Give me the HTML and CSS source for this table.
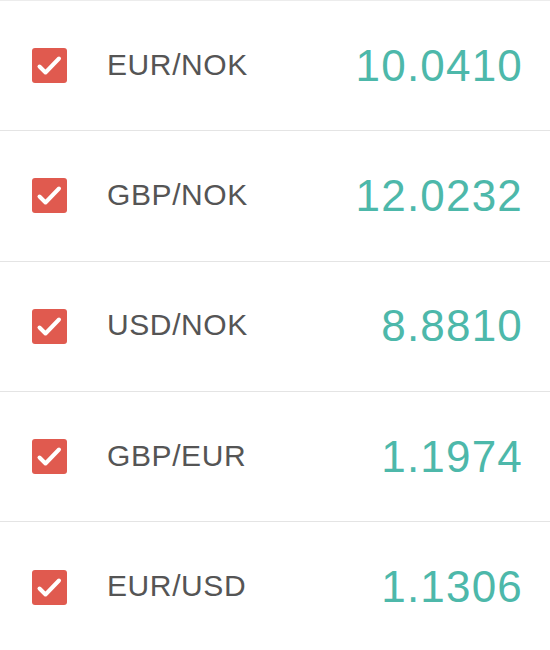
FILE: index.html
```html
<!DOCTYPE html>
<html>
<head>
<meta charset="utf-8">
<link rel="stylesheet" href="styles.css">
</head>
<body>
<ul class="list">
  <li class="row">
    <span class="check"><svg viewBox="0 0 35 35" width="35" height="35"><path d="M7.5 18.5 L13.5 24.5 L27 10.5"/></svg></span>
    <span class="pair">EUR/NOK</span>
    <span class="rate">10.0410</span>
  </li>
  <li class="row">
    <span class="check"><svg viewBox="0 0 35 35" width="35" height="35"><path d="M7.5 18.5 L13.5 24.5 L27 10.5"/></svg></span>
    <span class="pair">GBP/NOK</span>
    <span class="rate">12.0232</span>
  </li>
  <li class="row">
    <span class="check"><svg viewBox="0 0 35 35" width="35" height="35"><path d="M7.5 18.5 L13.5 24.5 L27 10.5"/></svg></span>
    <span class="pair">USD/NOK</span>
    <span class="rate">8.8810</span>
  </li>
  <li class="row">
    <span class="check"><svg viewBox="0 0 35 35" width="35" height="35"><path d="M7.5 18.5 L13.5 24.5 L27 10.5"/></svg></span>
    <span class="pair">GBP/EUR</span>
    <span class="rate">1.1974</span>
  </li>
  <li class="row">
    <span class="check"><svg viewBox="0 0 35 35" width="35" height="35"><path d="M7.5 18.5 L13.5 24.5 L27 10.5"/></svg></span>
    <span class="pair">EUR/USD</span>
    <span class="rate">1.1306</span>
  </li>
</ul>
</body>
</html>
```
FILE: styles.css
```css
html, body {
  margin: 0;
  padding: 0;
  background: #fff;
}
body {
  font-family: "Liberation Sans", Arial, sans-serif;
}
.list {
  list-style: none;
  margin: 0;
  padding: 0;
  border-top: 1px solid #ececec;
}
.row {
  display: flex;
  align-items: center;
  height: 130.3px;
  box-sizing: border-box;
  border-bottom: 1px solid #e4e4e4;
  padding: 0 27px 0 32px;
}
.row:last-child {
  border-bottom: none;
}
.check {
  flex: none;
  width: 35px;
  height: 35px;
  border-radius: 3px;
  background: #e05a4f;
  display: flex;
}
.check svg {
  fill: none;
  stroke: #fff;
  stroke-width: 4;
  stroke-linecap: round;
  stroke-linejoin: round;
}
.pair {
  margin-left: 40px;
  margin-bottom: 2px;
  font-size: 30px;
  color: #555;
  letter-spacing: 0.6px;
}
.rate {
  margin-left: auto;
  font-size: 44px;
  color: #4db8aa;
  letter-spacing: 1.2px;
}
```
